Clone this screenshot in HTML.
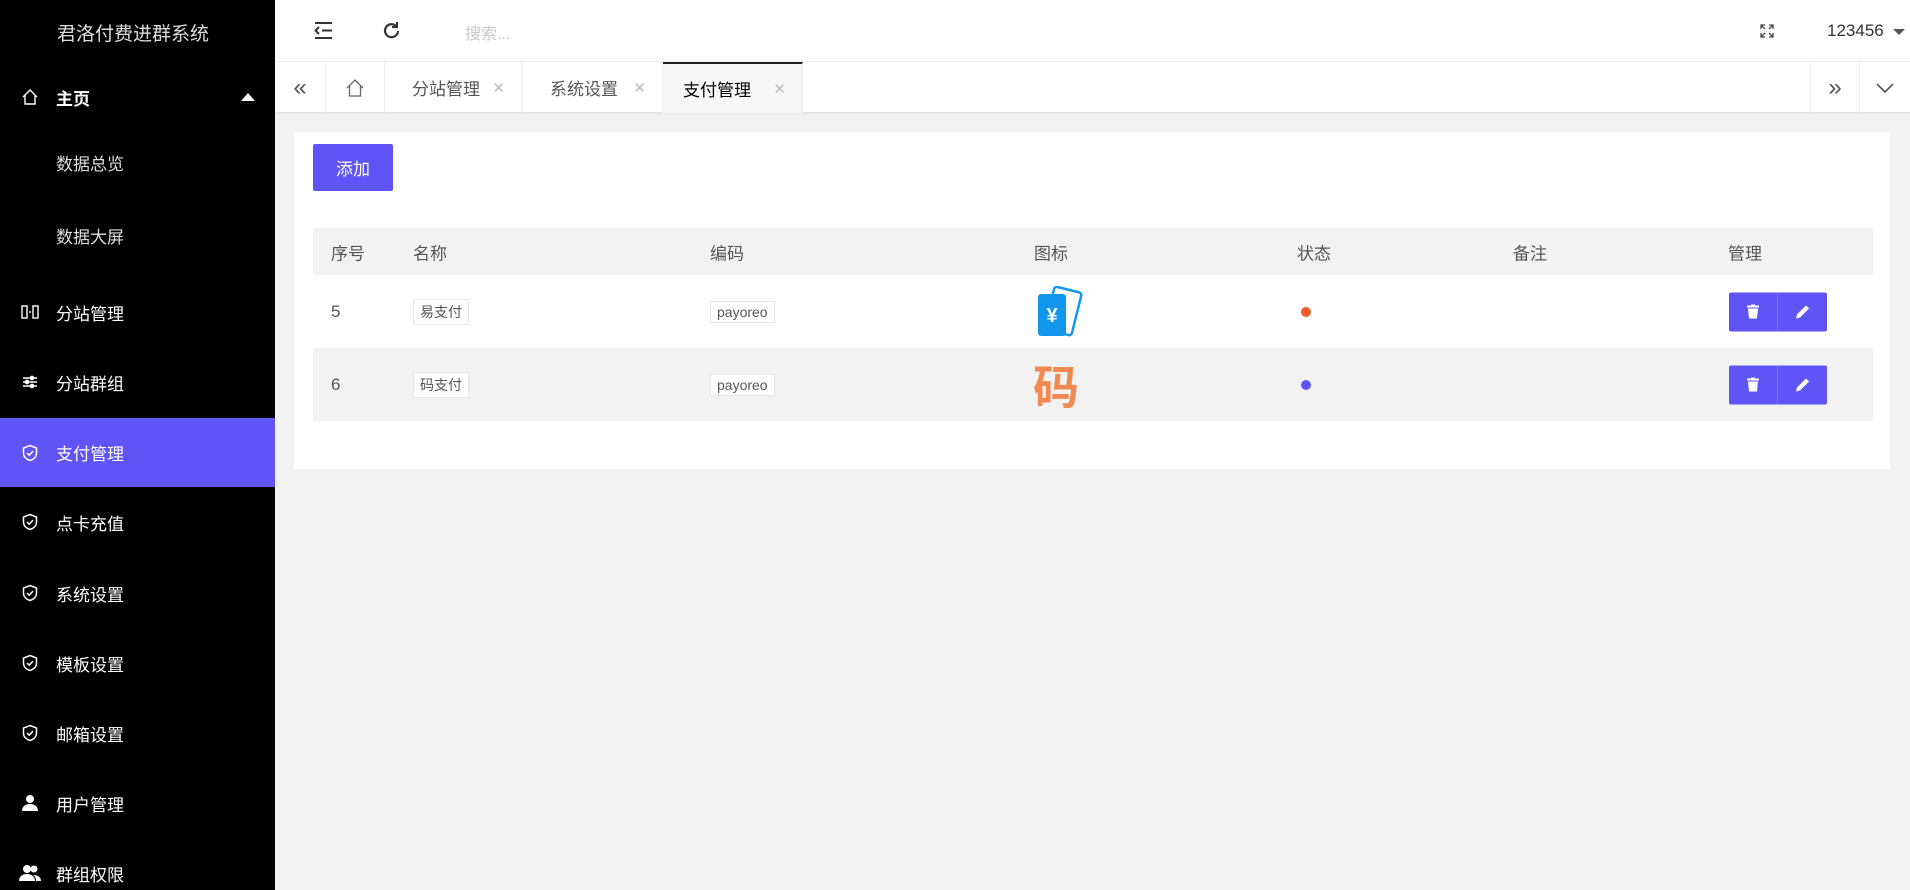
<!DOCTYPE html>
<html style="background:#f2f2f2;width:1910px;height:890px;overflow:hidden"><head><meta charset="utf-8"><style>
*{margin:0;padding:0;box-sizing:border-box}
body{width:1910px;height:890px;overflow:hidden;background:#f2f2f2;font-family:"Liberation Sans","Noto Sans CJK SC",sans-serif;position:relative}
.side{position:absolute;left:0;top:0;width:275px;height:890px;background:#000;color:#fff}
.title{position:absolute;left:57px;top:19px;font-size:19px;color:#ddd}
.mi{position:absolute;left:0;width:275px;height:70px;display:flex;align-items:center;font-size:17px;color:#fff}
.mi .ic{width:56px;display:flex;justify-content:center;padding-left:4px}
.mi.sub{padding-left:56px;color:#ddd}
.mi.act{background:#5f55f6}
.top{position:absolute;left:275px;top:0;right:0;height:62px;background:#fff;border-bottom:1px solid #eee}
.tabs{position:absolute;left:275px;top:62px;right:0;height:51px;background:#fff;border-bottom:1px solid #e2e2e2;box-shadow:0 1px 2px rgba(0,0,0,.05)}
.tab{position:absolute;top:0;height:51px;border-right:1px solid #eee;display:flex;align-items:center;font-size:17px;color:#555}
.tab .x{position:absolute;right:16px;color:#bbb;font-size:15px}
.card{position:absolute;left:294px;top:132px;width:1596px;height:337px;background:#fff;border-radius:2px}
.btn{position:absolute;left:19px;top:12px;width:80px;height:47px;background:#5f55f6;color:#fff;font-size:17px;display:flex;align-items:center;justify-content:center;border-radius:2px}
.tbl{position:absolute;left:19px;top:96px;width:1560px}
.row{position:relative;height:73px}
.row.h{height:47px;background:#f2f2f2}
.row.g{background:#f2f2f2}
.c{position:absolute;top:50%;transform:translateY(-50%);font-size:17px;color:#555}
.tag{border:1px solid #e6e6e6;background:#fff;font-size:14px;padding:2px 6px;color:#555}
.dot{width:10px;height:10px;border-radius:50%}
.ops{position:absolute;left:1416px;top:50%;transform:translateY(-50%);display:flex}
.ops div{width:49px;height:39px;background:#5f55f6;display:flex;align-items:center;justify-content:center}
.ops div:first-child{border-right:1px solid #7d75f8;border-radius:2px 0 0 2px}
.ops div:last-child{border-radius:0 2px 2px 0}
</style></head><body>
<div class="side">
<div class="title">君洛付费进群系统</div>
<div class="mi" style="top:62px;font-weight:bold"><span class="ic"><svg width="18" height="18" viewBox="0 0 18 18" fill="none" stroke="#fff" stroke-width="1.4"><path d="M2 9L9 2l7 7M4 7v9h10V7"/></svg></span>主页<span style="position:absolute;right:20px;width:0;height:0;border-left:7px solid transparent;border-right:7px solid transparent;border-bottom:8px solid #fff"></span></div>
<div class="mi sub" style="top:127px">数据总览</div>
<div class="mi sub" style="top:200px">数据大屏</div>
<div class="mi" style="top:277px"><span class="ic"><svg width="18" height="16" viewBox="0 0 18 16" fill="none" stroke="#fff" stroke-width="1.4"><rect x="1" y="2" width="5" height="12"/><rect x="12" y="2" width="5" height="12"/><path d="M8 8h2"/></svg></span>分站管理</div>
<div class="mi" style="top:347px"><span class="ic"><svg width="16" height="16" viewBox="0 0 16 16" stroke="#fff" stroke-width="1.5"><path d="M1 4h14M1 8h14M1 12h14"/><circle cx="10" cy="4" r="1.6" fill="#fff"/><circle cx="5" cy="8" r="1.6" fill="#fff"/><circle cx="10" cy="12" r="1.6" fill="#fff"/></svg></span>分站群组</div>
<div class="mi act" style="top:418px;height:69px"><span class="ic"><svg width="18" height="18" viewBox="0 0 18 18" fill="none" stroke="#fff" stroke-width="1.5"><path d="M9 1.5l6.5 2.5v5c0 4-3 6.5-6.5 7.5C5.5 15.5 2.5 13 2.5 9V4z"/><path d="M6 9l2.2 2.2L12 7.2"/></svg></span>支付管理</div>
<div class="mi" style="top:487px"><span class="ic"><svg width="18" height="18" viewBox="0 0 18 18" fill="none" stroke="#fff" stroke-width="1.5"><path d="M9 1.5l6.5 2.5v5c0 4-3 6.5-6.5 7.5C5.5 15.5 2.5 13 2.5 9V4z"/><path d="M6 9l2.2 2.2L12 7.2"/></svg></span>点卡充值</div>
<div class="mi" style="top:558px"><span class="ic"><svg width="18" height="18" viewBox="0 0 18 18" fill="none" stroke="#fff" stroke-width="1.5"><path d="M9 1.5l6.5 2.5v5c0 4-3 6.5-6.5 7.5C5.5 15.5 2.5 13 2.5 9V4z"/><path d="M6 9l2.2 2.2L12 7.2"/></svg></span>系统设置</div>
<div class="mi" style="top:628px"><span class="ic"><svg width="18" height="18" viewBox="0 0 18 18" fill="none" stroke="#fff" stroke-width="1.5"><path d="M9 1.5l6.5 2.5v5c0 4-3 6.5-6.5 7.5C5.5 15.5 2.5 13 2.5 9V4z"/><path d="M6 9l2.2 2.2L12 7.2"/></svg></span>模板设置</div>
<div class="mi" style="top:698px"><span class="ic"><svg width="18" height="18" viewBox="0 0 18 18" fill="none" stroke="#fff" stroke-width="1.5"><path d="M9 1.5l6.5 2.5v5c0 4-3 6.5-6.5 7.5C5.5 15.5 2.5 13 2.5 9V4z"/><path d="M6 9l2.2 2.2L12 7.2"/></svg></span>邮箱设置</div>
<div class="mi" style="top:768px"><span class="ic"><svg width="18" height="18" viewBox="0 0 18 18" fill="#fff"><circle cx="9" cy="5" r="4"/><path d="M1 17c0-5 4-7 8-7s8 2 8 7z"/></svg></span>用户管理</div>
<div class="mi" style="top:838px"><span class="ic"><svg width="22" height="18" viewBox="0 0 22 18" fill="#fff"><circle cx="8" cy="5" r="4"/><circle cx="15" cy="5" r="3.5"/><path d="M0 17c0-5 4-7 8-7s8 2 8 7zM17 17c0-3-1-5-3-6 5 0 8 2 8 6z"/></svg></span>群组权限</div>
</div>
<div class="top">
<svg style="position:absolute;left:39px;top:22px" width="19" height="17" viewBox="0 0 19 17" stroke="#333" stroke-width="2"><path d="M1 1h17M8 8.5h10M1 16h17"/><path d="M5 5L1.5 8.5 5 12" fill="none"/></svg>
<svg style="position:absolute;left:108px;top:21px" width="18" height="19" viewBox="0 0 18 19" fill="none" stroke="#333" stroke-width="2.2"><path d="M15 10a6.5 6.5 0 1 1-2-5"/><path d="M14 1v5h-5" stroke-width="2"/></svg>
<div style="position:absolute;left:190px;top:20px;font-size:16px;color:#c8c8c8">搜索...</div>
<svg style="position:absolute;left:1485px;top:24px" width="14" height="14" viewBox="0 0 14 14" fill="none" stroke="#444" stroke-width="1.3"><path d="M1 5V1h4M9 1h4v4M13 9v4H9M5 13H1V9M1 1l4 4M13 1L9 5M13 13L9 9M1 13l4-4"/></svg>
<div style="position:absolute;left:1552px;top:21px;font-size:17px;color:#333">123456</div>
<div style="position:absolute;left:1618px;top:29px;border-left:6px solid transparent;border-right:6px solid transparent;border-top:6px solid #555"></div>
</div>
<div class="tabs">
<div class="tab" style="left:0;width:51px;justify-content:center;font-size:24px;color:#555">«</div>
<div class="tab" style="left:51px;width:59px;justify-content:center"><svg width="20" height="20" viewBox="0 0 20 20" fill="none" stroke="#666" stroke-width="1.3"><path d="M2 10L10 2l8 8M4.5 8v10h11V8"/></svg></div>
<div class="tab" style="left:110px;width:137px;padding-left:27px">分站管理<span class="x">✕</span></div>
<div class="tab" style="left:247px;width:141px;padding-left:28px">系统设置<span class="x">✕</span></div>
<div class="tab" style="left:388px;width:140px;padding-left:20px;background:#f6f6f6;color:#000;border-top:2px solid #222">支付管理<span class="x">✕</span></div>
<div class="tab" style="left:1535px;width:50px;justify-content:center;border-left:1px solid #eee;font-size:24px;color:#555">»</div>
<div class="tab" style="left:1585px;width:50px;justify-content:center;border-right:none"><svg width="18" height="10" viewBox="0 0 18 10" fill="none" stroke="#555" stroke-width="1.6"><path d="M1 1l8 8 8-8"/></svg></div>
</div>
<div class="card">
<div class="btn">添加</div>
<div class="tbl">
<div class="row h"><span class="c" style="left:18px">序号</span><span class="c" style="left:100px">名称</span><span class="c" style="left:397px">编码</span><span class="c" style="left:721px">图标</span><span class="c" style="left:984px">状态</span><span class="c" style="left:1200px">备注</span><span class="c" style="left:1415px">管理</span></div>
<div class="row"><span class="c" style="left:18px">5</span><span class="c tag" style="left:100px">易支付</span><span class="c tag" style="left:397px">payoreo</span>
<svg class="c" style="left:722px" width="48" height="52" viewBox="0 0 48 52"><rect x="14" y="3" width="28" height="44" rx="3" transform="rotate(14 28 25)" fill="none" stroke="#1296ee" stroke-width="2.5"/><rect x="3" y="8" width="28" height="42" rx="3" fill="#1296ee"/><text x="17" y="36" font-size="20" fill="#fff" text-anchor="middle" font-family="Liberation Sans" font-weight="bold">¥</text></svg>
<span class="c dot" style="left:988px;background:#f05a28"></span>
<div class="ops"><div><svg width="12" height="14" viewBox="0 0 12 14" fill="#fff"><rect x="0" y="1" width="12" height="2"/><rect x="4" y="0" width="4" height="2"/><path d="M1 4h10l-1 10H2z"/></svg></div><div><svg width="13" height="13" viewBox="0 0 13 13" fill="#fff"><path d="M10 0l3 3-9 9-4 1 1-4z"/></svg></div></div></div>
<div class="row g"><span class="c" style="left:18px">6</span><span class="c tag" style="left:100px">码支付</span><span class="c tag" style="left:397px">payoreo</span>
<span class="c" style="left:720px;font-size:46px;color:#f08a50;font-weight:bold;font-family:'Noto Sans CJK SC',sans-serif">码</span>
<span class="c dot" style="left:988px;background:#5f55f6"></span>
<div class="ops"><div><svg width="12" height="14" viewBox="0 0 12 14" fill="#fff"><rect x="0" y="1" width="12" height="2"/><rect x="4" y="0" width="4" height="2"/><path d="M1 4h10l-1 10H2z"/></svg></div><div><svg width="13" height="13" viewBox="0 0 13 13" fill="#fff"><path d="M10 0l3 3-9 9-4 1 1-4z"/></svg></div></div></div>
</div>
</div>
</body></html>
